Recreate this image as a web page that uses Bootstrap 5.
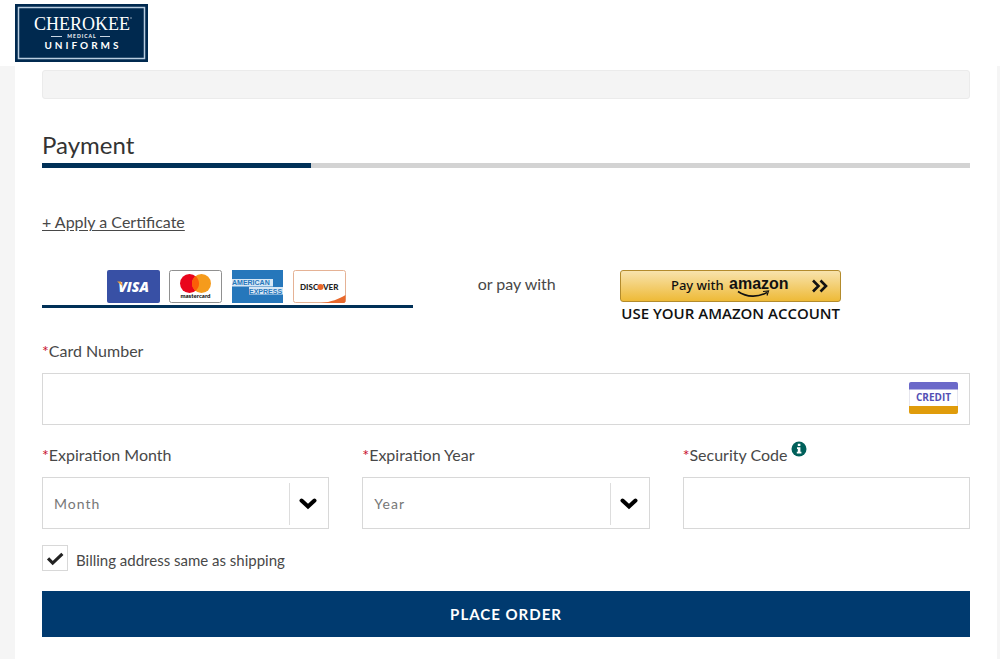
<!DOCTYPE html>
<html lang="en">
<head>
<meta charset="utf-8">
<meta name="viewport" content="width=device-width, initial-scale=1">
<title>Checkout - Payment</title>
<link href="https://cdn.jsdelivr.net/npm/bootstrap@5.3.0/dist/css/bootstrap.min.css" rel="stylesheet">
<script defer src="https://cdn.jsdelivr.net/npm/bootstrap@5.3.0/dist/js/bootstrap.bundle.min.js"></script>
<style>
  body { background: #f5f5f5; color: #484848; font-family: Lato, sans-serif; font-size: 16px; line-height: 24px; }
  .site-header { padding: 4px 15px; }
  .site-header a { line-height: 0; }
  .checkout { margin: 0 3px 0 15px; padding: 4px 27px 22px; }
  .summary-box { height: 29px; background: #f4f4f4; border: 1px solid #ebebeb; border-radius: 3px; }
  .step-title { font-size: 24px; line-height: 32px; font-weight: 400; color: #333; margin: 30px 0 2px; }
  .step-bar { height: 5px; border-radius: 0; background: #d3d3d3; }
  .step-bar .progress-bar { background: #003057; width: 29%; }
  .certificate { margin: 42px 0 36px; }
  .certificate a { color: #484848; text-underline-offset: 2px; }
  .methods { margin-bottom: 14px; }
  .card-tab { width: 40%; gap: 9px; padding: 0 3px 2px 0; border-bottom: 3px solid #003057; }
  .or-text { width: 207px; line-height: 28px; }
  .amazon { width: 221px; }
  .btn-amazon { height: 32px; padding: 0; border: 1px solid #b38b2c; border-radius: 3px; background: linear-gradient(#f8e3ad, #eeba37); line-height: 0; }
  .amazon-note { font: 600 15px/23px "Open Sans", sans-serif; color: #111; white-space: nowrap; }
  .field-label { display: block; line-height: 24px; margin-bottom: 10px; }
  .req { color: #c8102e; }
  .field, .field:focus { height: 52px; border: 1px solid #d8d8d8; border-radius: 0; box-shadow: none; color: #777; font-size: 14px; letter-spacing: 1px; padding: 0 11px; }
  select.field { background-image: none; }
  .pick-arrow { right: 0; top: 6px; bottom: 4px; width: 40px; padding-right: 3px; border-left: 1px solid #ddd; pointer-events: none; }
  .card-mark { right: 12px; top: 9px; line-height: 0; }
  .fields { --bs-gutter-x: 33px; margin-top: 18px; }
  .info { line-height: 0; padding: 0 0 12px; margin: -2px 0 0 4px; }
  .same { margin: 16px 0 20px; min-height: 26px; padding: 0; }
  .same .form-check-input { width: 26px; height: 26px; margin: 0 8px 0 0; float: none; border: 1px solid #d8d8d8; border-radius: 0; background-color: #fff; background-size: 100% 100%; }
  .same .form-check-input:checked { background-image: url("data:image/svg+xml,%3csvg xmlns='http://www.w3.org/2000/svg' viewBox='0 0 26 26'%3e%3cpath d='M5.500 13.500l5 5L21 8.500' fill='none' stroke='%23222' stroke-width='3.400'/%3e%3c/svg%3e"); }
  .same label { font-size: 15px; line-height: 22px; padding-top: 4px; }
  .btn-order, .btn-order:hover { height: 46px; border: 0; border-radius: 0; background: #003a6f; color: #fff; font-size: 15px; font-weight: 700; letter-spacing: 1px; }
</style>
</head>
<body>
<header class="site-header bg-white d-flex">
  <a href="#" aria-label="Cherokee Medical Uniforms">
    <svg width="133" height="58" viewBox="0 0 133 58">
      <path fill="#00294f" d="M0 0h133v58H0z"/>
      <path fill="none" stroke="#b9cde0" stroke-width="1.500" d="M3.500 3.500h126v51H3.500z"/>
      <g fill="#fff" text-anchor="middle">
        <text x="67" y="26" font-family="Liberation Serif, serif" font-size="18">CHEROKEE</text>
        <text x="67" y="34" font-family="Lato, sans-serif" font-weight="700" font-size="5" letter-spacing="1">MEDICAL</text>
        <text x="68" y="45" font-family="Lato, sans-serif" font-weight="700" font-size="10" letter-spacing="3">UNIFORMS</text>
      </g>
      <path stroke="#c9d6e3" d="M36 32.500h11M85 32.500h10"/>
      <circle cx="116" cy="14" r=".7" fill="#c9d6e3"/>
    </svg>
  </a>
</header>
<main class="checkout bg-white">
  <div class="summary-box"></div>
  <h1 class="step-title">Payment</h1>
  <div class="progress step-bar" role="progressbar" aria-label="Checkout progress"><div class="progress-bar"></div></div>
  <p class="certificate"><a href="#">+ Apply a Certificate</a></p>

  <div class="methods d-flex align-items-start">
    <div class="card-tab d-flex justify-content-center">
      <svg width="53" height="33" viewBox="0 0 53 33" role="img" aria-label="Visa">
        <rect width="53" height="33" rx="2" fill="#3850a5"/>
        <text x="26.500" y="22" text-anchor="middle" font-family="Open Sans, sans-serif" font-size="14" font-weight="800" font-style="italic" fill="#fff">VISA</text>
        <path fill="#eea13a" d="M10 11.500h4l2 5z"/>
      </svg>
      <svg width="53" height="33" viewBox="0 0 53 33" role="img" aria-label="Mastercard">
        <rect x=".5" y=".5" width="52" height="32" rx="2" fill="#fff" stroke="#909090"/>
        <circle cx="20.500" cy="13.500" r="9.500" fill="#e9051c"/><circle cx="32.500" cy="13.500" r="9.500" fill="#f59b1c"/>
        <path fill="#fb5e08" d="M26.500 6.100a9.500 9.500 0 0 1 0 14.800 9.500 9.500 0 0 1 0-14.800z"/>
        <text x="26.500" y="28" text-anchor="middle" font-family="Lato, sans-serif" font-size="6" font-weight="900" fill="#111">mastercard</text>
      </svg>
      <svg width="53" height="33" viewBox="0 0 53 33" role="img" aria-label="American Express">
        <path fill="#2677bb" d="M1 0h51v33H1z"/>
        <path fill="#d7e7f5" d="M1 9h41v7.500H1zM18 17h34v7.500H18z"/>
        <g font-family="Liberation Sans, sans-serif" font-size="7" font-weight="700" fill="#2677bb"><text x="1" y="15">AMERICAN</text><text x="18" y="23.500">EXPRESS</text></g>
      </svg>
      <svg width="53" height="33" viewBox="0 0 53 33" role="img" aria-label="Discover">
        <rect x=".5" y=".5" width="52" height="32" rx="2" fill="#fff" stroke="#e5b295"/>
        <path fill="#e8682c" d="M52.500 25v6a2 2 0 0 1-2 2H28c10-1 18-4 24.500-8z"/>
        <g font-family="Lato, sans-serif" font-size="8" font-weight="900" fill="#222"><text x="7" y="20">DISC</text><text x="30" y="20">VER</text></g>
        <circle cx="27.500" cy="17" r="3" fill="#e8682c"/>
      </svg>
    </div>
    <div class="or-text text-center">or pay with</div>
    <div class="amazon text-center">
      <button type="button" class="btn btn-amazon w-100 d-block" aria-label="Pay with Amazon">
        <svg width="219" height="30" viewBox="0 0 219 30">
          <text x="50" y="19" font-family="Noto Sans, sans-serif" font-size="13" font-weight="500" fill="#111">Pay with</text>
          <text x="108" y="18" font-family="Liberation Sans, sans-serif" font-size="16" font-weight="700" fill="#111">amazon</text>
          <path d="M117 20.500c9 6 20 6 29 1" fill="none" stroke="#111" stroke-width="1.600"/><path d="M142 20.500l5.500-.5-1.500 4.500" fill="none" stroke="#111" stroke-width="1.200"/>
          <path d="M192 9.500l5.500 5.500-5.500 5.500M199.500 9.500l5.500 5.500-5.500 5.500" fill="none" stroke="#111" stroke-width="2.600"/>
        </svg>
      </button>
      <div class="amazon-note">USE YOUR AMAZON ACCOUNT</div>
    </div>
  </div>

  <form>
    <label class="field-label" for="card"><span class="req">*</span>Card Number</label>
    <div class="position-relative">
      <input class="form-control field" id="card" type="text" inputmode="numeric">
      <span class="card-mark position-absolute">
        <svg width="49" height="32" viewBox="0 0 49 32" role="img" aria-label="Credit card">
          <rect x=".5" y=".5" width="48" height="31" rx="2" fill="#fff" stroke="#e6e6ee"/>
          <path fill="#6b69c9" d="M0 7.500V2a2 2 0 0 1 2-2h45a2 2 0 0 1 2 2v5.500z"/><path fill="#e09c0b" d="M0 24v6a2 2 0 0 0 2 2h45a2 2 0 0 0 2-2v-6z"/>
          <text x="24.500" y="19" text-anchor="middle" font-family="Open Sans, sans-serif" font-size="10" font-weight="700" fill="#5450b4">CREDIT</text>
        </svg>
      </span>
    </div>
    <div class="row fields">
      <div class="col-4">
        <label class="field-label" for="month"><span class="req">*</span>Expiration Month</label>
        <div class="position-relative">
          <select class="form-select field" id="month"><option>Month</option></select>
          <span class="pick-arrow position-absolute d-flex align-items-center justify-content-center"><svg width="18" height="12" viewBox="0 0 18 12"><path d="M2.500 2.500L9 8.500l6.500-6" fill="none" stroke="#000" stroke-width="4" stroke-linecap="round"/></svg></span>
        </div>
      </div>
      <div class="col-4">
        <label class="field-label" for="year"><span class="req">*</span>Expiration Year</label>
        <div class="position-relative">
          <select class="form-select field" id="year"><option>Year</option></select>
          <span class="pick-arrow position-absolute d-flex align-items-center justify-content-center"><svg width="18" height="12" viewBox="0 0 18 12"><path d="M2.500 2.500L9 8.500l6.500-6" fill="none" stroke="#000" stroke-width="4" stroke-linecap="round"/></svg></span>
        </div>
      </div>
      <div class="col-4">
        <div class="d-flex align-items-start">
          <label class="field-label" for="code"><span class="req">*</span>Security Code</label>
          <button type="button" class="btn border-0 info" aria-label="About the security code"><svg width="16" height="16" viewBox="0 0 16 16"><circle cx="8" cy="8" r="7.500" fill="#00605b"/><path fill="#fff" d="M6.800 2.800h2.600v2.300H6.800zM6 6.300h3.400v4.500h1v1.700H5.800v-1.700h1V8H6z"/></svg></button>
        </div>
        <input class="form-control field" id="code" type="text" inputmode="numeric">
      </div>
    </div>
    <div class="form-check same d-flex align-items-center">
      <input class="form-check-input" type="checkbox" id="same" checked>
      <label for="same">Billing address same as shipping</label>
    </div>
    <button type="submit" class="btn btn-order w-100 d-block">PLACE ORDER</button>
  </form>
</main>
</body>
</html>
